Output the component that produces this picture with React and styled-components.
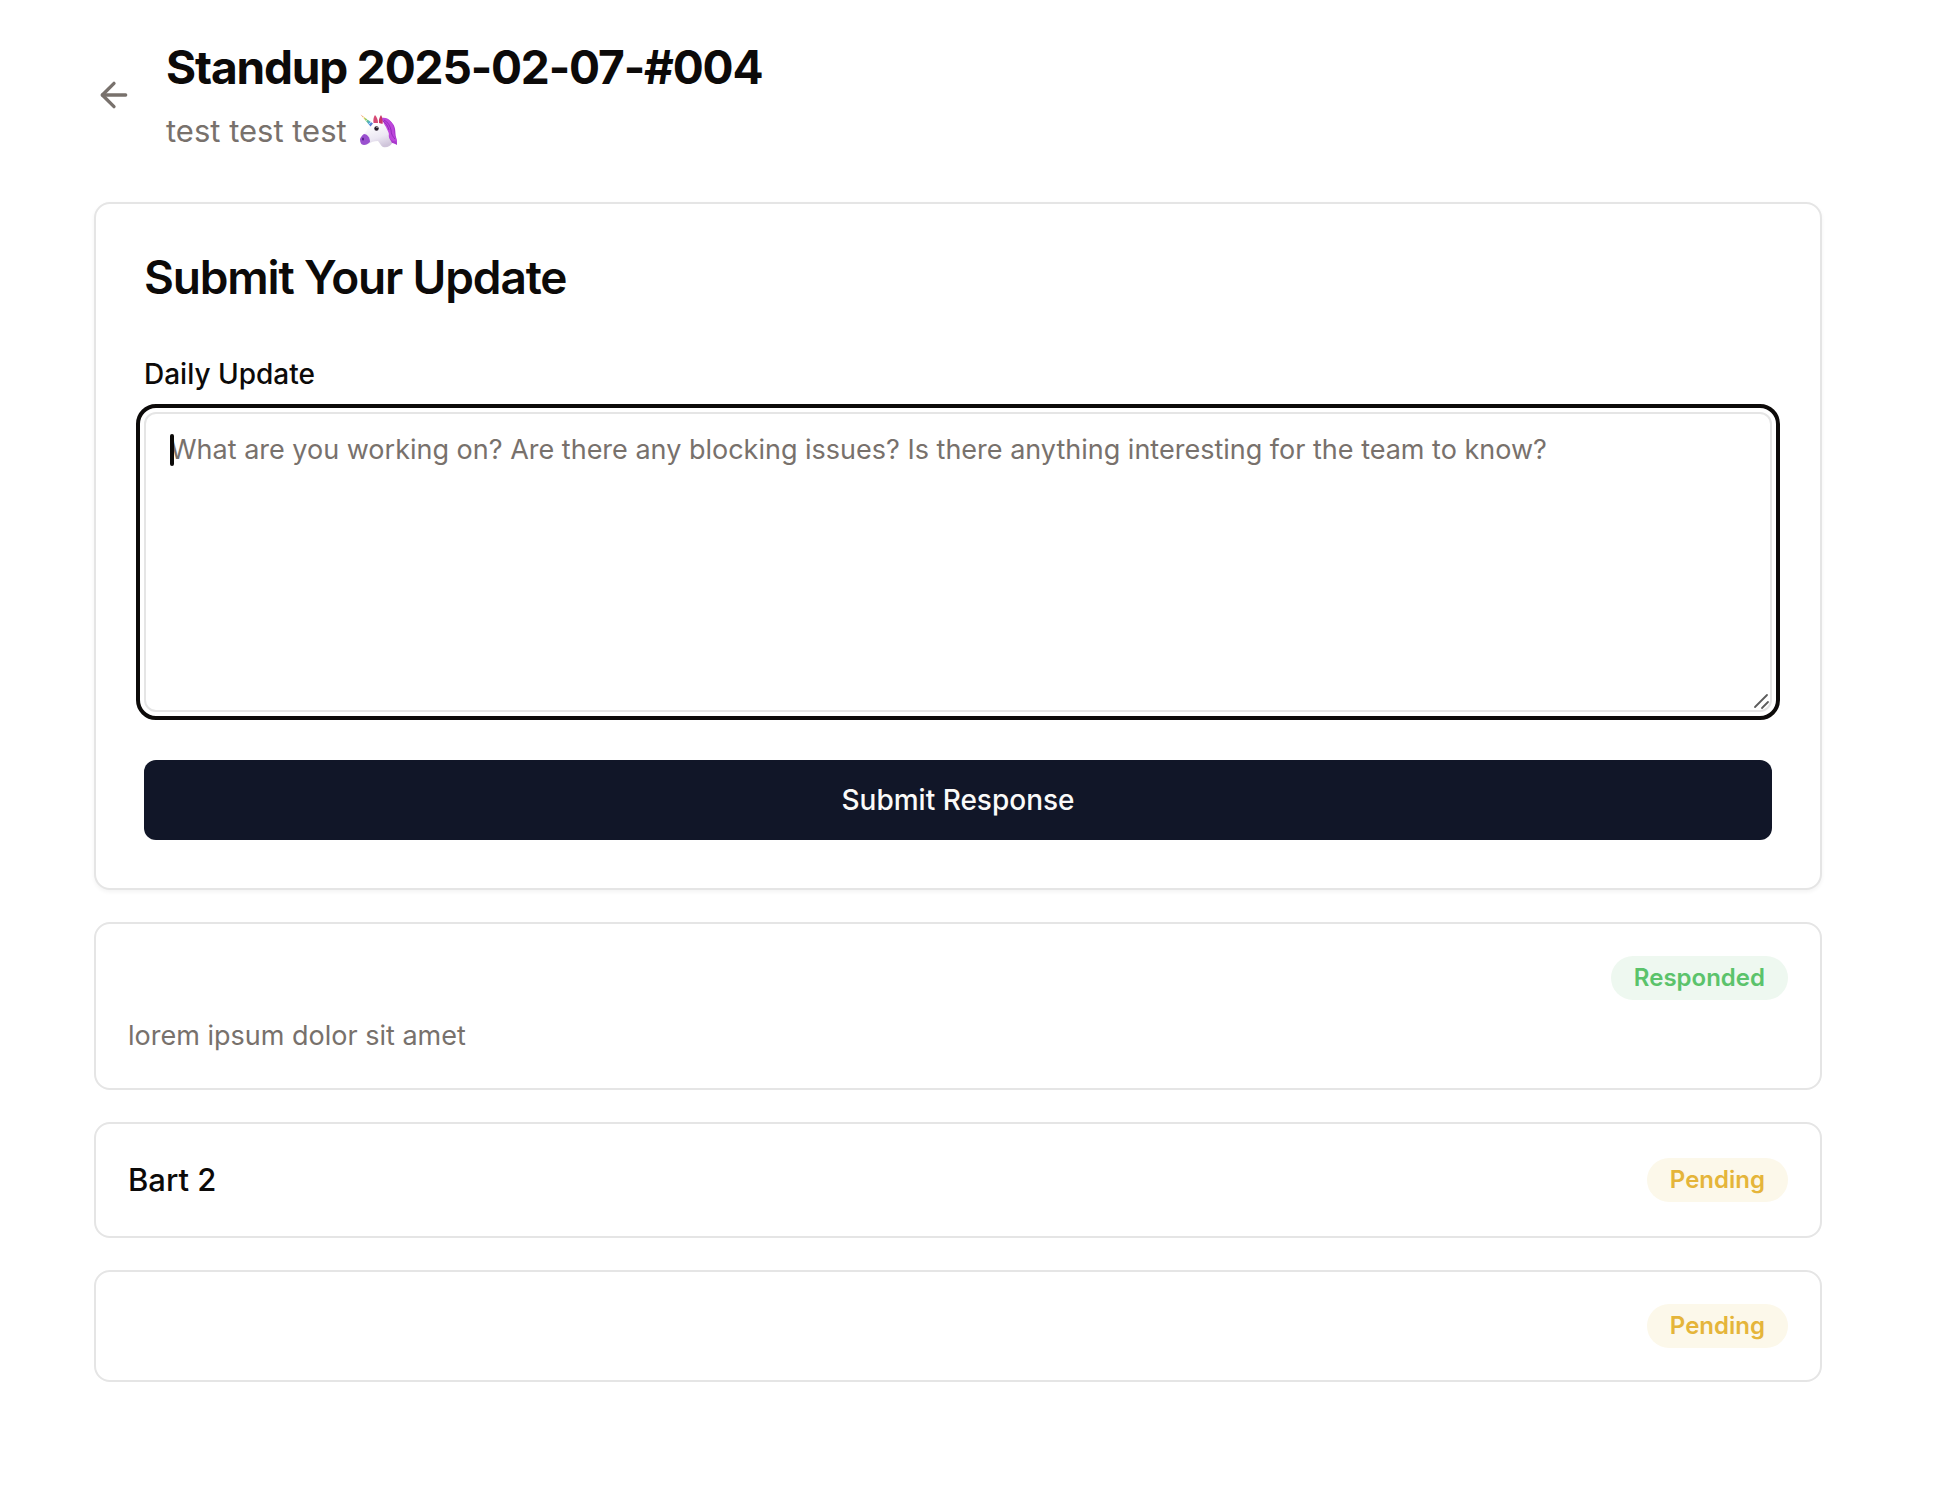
import React from "react";
import styled, { createGlobalStyle, css } from "styled-components";
import { ArrowLeft } from "lucide-react";

const GlobalStyle = createGlobalStyle`
  *, *::before, *::after { box-sizing: border-box; }
  body {
    margin: 0;
    background: #ffffff;
    color: #0c0a09;
    font-family: Inter, "Liberation Sans", sans-serif;
    font-size: 28px;
    line-height: 40px;
  }
  h1, h2, h3, p { margin: 0; }
`;

const Page = styled.main`
  display: flex;
  flex-direction: column;
  padding: 36px 136px 120px 94px;
`;

const Header = styled.header`
  display: flex;
  align-items: center;
  gap: 32px;
  margin-bottom: 48px;
`;

const BackLink = styled.a`
  display: flex;
  color: #78716c;
`;

const HeaderText = styled.div`
  display: flex;
  flex-direction: column;
  gap: 10px;
`;

const Title = styled.h1`
  font-size: 46px;
  line-height: 62px;
  font-weight: 700;
  letter-spacing: -0.025em;
`;

const Subtitle = styled.p`
  display: flex;
  align-items: center;
  gap: 12px;
  color: #78716c;
  font-size: 31px;
  line-height: 46px;
`;

const Stack = styled.div`
  display: flex;
  flex-direction: column;
  gap: 32px;
`;

const cardFrame = css`
  border: 2px solid #e5e5e5;
  border-radius: 16px;
  background: #ffffff;
`;

const FormCard = styled.section`
  ${cardFrame}
  padding: 48px;
  box-shadow: 0 2px 4px rgba(0, 0, 0, 0.05);
`;

const FormTitle = styled.h2`
  font-size: 46px;
  line-height: 50px;
  font-weight: 600;
  letter-spacing: -0.025em;
  margin-bottom: 58px;
`;

const Form = styled.form`
  display: flex;
  flex-direction: column;
  gap: 48px;
`;

const Field = styled.div`
  display: flex;
  flex-direction: column;
  gap: 24px;
`;

const Label = styled.label`
  font-weight: 500;
  line-height: 28px;
`;

const TextBox = styled.div`
  position: relative;
  display: flex;
`;

const Textarea = styled.textarea`
  flex: 1;
  min-width: 0;
  height: 300px;
  padding: 16px 24px;
  border: 2px solid #e5e5e5;
  border-radius: 12px;
  outline: 4px solid #0c0a09;
  outline-offset: 4px;
  background: transparent;
  color: inherit;
  caret-color: transparent;
  font: inherit;
  font-size: 27px;
  resize: none;
  &::placeholder { color: #78716c; opacity: 1; }
`;

const Caret = styled.span`
  position: absolute;
  left: 26px;
  top: 22px;
  width: 4px;
  height: 32px;
  border-radius: 2px;
  background: #0c0a09;
`;

const Grip = styled.svg`
  position: absolute;
  right: 2px;
  bottom: 2px;
`;

const SubmitButton = styled.button`
  height: 80px;
  border: 0;
  border-radius: 12px;
  background: #111628;
  color: #fafaf9;
  font: inherit;
  font-weight: 500;
  cursor: pointer;
`;

const ResponseCard = styled.article`
  ${cardFrame}
  display: flex;
  flex-direction: column;
  gap: 16px;
  padding: 32px;
`;

const ResponseHead = styled.div`
  display: flex;
  align-items: center;
  justify-content: space-between;
`;

const Name = styled.h3`
  font-size: 31px;
  line-height: 48px;
  font-weight: 500;
`;

const Badge = styled.span`
  margin-left: auto;
  padding: 6px 23px;
  border-radius: 22px;
  font-size: 24px;
  line-height: 32px;
  font-weight: 600;
  color: ${(p) => (p.$done ? "#5bc36b" : "#e5b53a")};
  background: ${(p) => (p.$done ? "#eef8f0" : "#fcf8ea")};
`;

const Answer = styled.p`
  color: #78716c;
  font-size: 27px;
`;

function Unicorn() {
  return (
    <svg width="40" height="40" viewBox="0 0 40 40" role="img" aria-label="unicorn">
      <defs>
        <linearGradient id="horn" x1="2" y1="4" x2="13" y2="15" gradientUnits="userSpaceOnUse">
          <stop offset="0" stopColor="#ee6a62" />
          <stop offset="0.25" stopColor="#efd052" />
          <stop offset="0.5" stopColor="#6fc878" />
          <stop offset="0.75" stopColor="#4aa5e0" />
          <stop offset="1" stopColor="#6a56c8" />
        </linearGradient>
        <linearGradient id="face" x1="14" y1="12" x2="22" y2="36" gradientUnits="userSpaceOnUse">
          <stop offset="0" stopColor="#ffffff" />
          <stop offset="0.6" stopColor="#ece8f3" />
          <stop offset="1" stopColor="#cfc4da" />
        </linearGradient>
      </defs>
      <path d="M20 9C24 5 31 8 34 13c3 4 2 9 3 13 1 3 1 5 1 8-2-1-3-2-5-2-2 1-4 0-5-2L20 16Z" fill="#a838cc" />
      <path d="M13 13c3-3 9-5 13-2 4 3 5 8 4 12-1 4 2 6 3 9-1 3-5 5-9 4-2-1-3-4-5-6-4 0-7 1-10 3-3 2-7 0-7-4 0-4 4-7 6-10 1-3 3-5 5-6Z" fill="url(#face)" />
      <path d="M5 23c3 0 6 3 6 8-2 2-4 3-6 3-3 0-4-3-4-6 1-2 2-4 4-5Z" fill="#9a50cf" />
      <ellipse cx="4" cy="28" rx="1" ry="1.500" fill="#55208a" />
      <path d="M1.500 3.500 14 12.500l-2.500 3Z" fill="url(#horn)" />
      <path d="m4 7 2-2m1 5 2-2m1 5 2-2" stroke="#ffffff" strokeWidth="0.600" />
      <path d="M14.500 12c-.500-3 0-6 1.500-8 2 2 3 5 3 8Z" fill="#d64a74" />
      <path d="M20 12c-.500-3 .500-6 2-8 2 3 2 6 1.500 9Z" fill="#c93568" />
      <path d="M23 7c6-1 11 4 12 11 0 5 1 8 3 12-4 1-8-1-8-6 0-3-2-5-3-8-2-3-3-5-4-9Z" fill="#bd46db" />
      <path d="M25 9c4 2 6 6 7 10 0 4 2 7 4 9M24 10c3 2 5 5 6 9" stroke="#8e28b8" strokeWidth="0.900" fill="none" />
      <ellipse cx="17.500" cy="17.500" rx="2.200" ry="2.200" fill="#241a28" />
      <circle cx="18" cy="16.500" r="0.600" fill="#ffffff" />
    </svg>
  );
}

const responses = [
  { id: 1, name: "", answer: "lorem ipsum dolor sit amet" },
  { id: 2, name: "Bart 2" },
  { id: 3, name: "" },
];

export default function App() {
  return (
    <>
      <GlobalStyle />
      <Page>
        <Header>
          <BackLink href="#" aria-label="Back">
            <ArrowLeft size={40} />
          </BackLink>
          <HeaderText>
            <Title>Standup 2025-02-07-#004</Title>
            <Subtitle>
              test test test <Unicorn />
            </Subtitle>
          </HeaderText>
        </Header>
        <Stack>
          <FormCard>
            <FormTitle>Submit Your Update</FormTitle>
            <Form onSubmit={(e) => e.preventDefault()}>
              <Field>
                <Label htmlFor="update">Daily Update</Label>
                <TextBox>
                  <Textarea
                    id="update"
                    placeholder="What are you working on? Are there any blocking issues? Is there anything interesting for the team to know?"
                  />
                  <Caret />
                  <Grip width="18" height="18" viewBox="0 0 18 18" aria-hidden="true">
                    <path d="M3 15 15 3M10 16l6-6" stroke="#5c5c5c" strokeWidth="1.800" strokeLinecap="round" />
                  </Grip>
                </TextBox>
              </Field>
              <SubmitButton type="submit">Submit Response</SubmitButton>
            </Form>
          </FormCard>
          {responses.map((r) => (
            <ResponseCard key={r.id}>
              <ResponseHead>
                {r.name && <Name>{r.name}</Name>}
                <Badge $done={Boolean(r.answer)}>{r.answer ? "Responded" : "Pending"}</Badge>
              </ResponseHead>
              {r.answer && <Answer>{r.answer}</Answer>}
            </ResponseCard>
          ))}
        </Stack>
      </Page>
    </>
  );
}
